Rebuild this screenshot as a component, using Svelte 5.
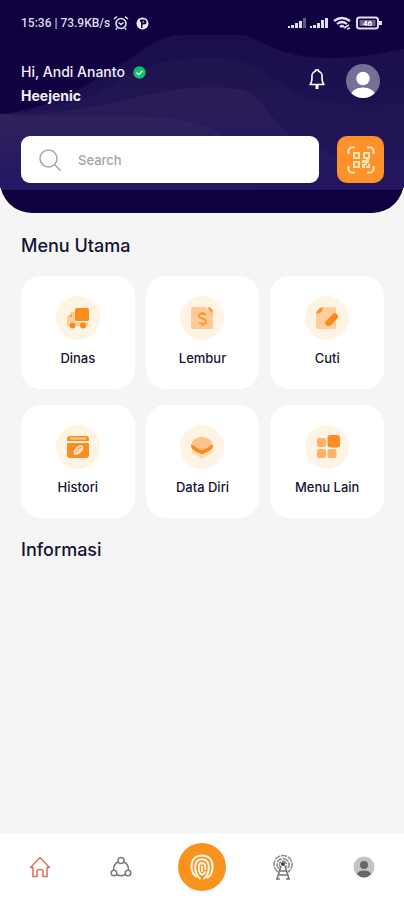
<script>
  let query = $state('');
  const menu = [
    { id: 'dinas', label: 'Dinas' },
    { id: 'lembur', label: 'Lembur' },
    { id: 'cuti', label: 'Cuti' },
    { id: 'histori', label: 'Histori' },
    { id: 'data', label: 'Data Diri' },
    { id: 'lain', label: 'Menu Lain' }
  ];
</script>

<div class="app">
  <header>
    <svg class="waves" viewBox="0 0 404 190" preserveAspectRatio="none" aria-hidden="true">
      <defs>
        <linearGradient id="far" x1="0" y1="0" x2="0" y2="1">
          <stop offset="0" stop-color="#1a0e4b" />
          <stop offset="1" stop-color="#211459" />
        </linearGradient>
        <linearGradient id="middle" x1="0" y1="0" x2="0" y2="1">
          <stop offset="0" stop-color="#21154f" />
          <stop offset="1" stop-color="#21145a" />
        </linearGradient>
        <linearGradient id="near" x1="0" y1="0" x2="0" y2="1">
          <stop offset="0" stop-color="#2b1e57" />
          <stop offset="1" stop-color="#23155f" />
        </linearGradient>
        <linearGradient id="front" x1="0" y1="0" x2="0" y2="1">
          <stop offset="0" stop-color="#30225c" />
          <stop offset="1" stop-color="#241661" />
        </linearGradient>
      </defs>
      <path d="M0 114C50 110 88 84 122 64C150 46 160 35 184 35H244C262 40 280 58 330 58C365 58 380 52 404 49V190H0Z" fill="url(#far)" />
      <path d="M0 114C80 110 104 90 132 74C160 59 190 58 220 58C258 60 277 87 310 98C340 107 370 105 404 104V190H0Z" fill="url(#middle)" />
      <path d="M0 114C65 116 105 105 145 95C180 87 215 86 238 89C262 95 265 112 286 132C312 151 360 165 404 160V190H0Z" fill="url(#near)" />
      <path d="M0 114C50 119 100 115 150 117C190 119 212 126 222 136C240 160 246 178 255 190H0Z" fill="url(#front)" />
    </svg>

    <div class="status">
      <span>15:36 | 73.9KB/s</span>
      <svg width="16" height="16" viewBox="0 0 16 16" fill="none" stroke="#e4e0ef" stroke-width="1.6" aria-hidden="true">
        <circle cx="8" cy="8.5" r="5" /><path d="M1 4 4 1.5M15 4 12 1.5M5.5 7.5 8 9.5 10.5 7.5M4 13 3 14.5M12 13 13 14.5" />
      </svg>
      <svg class="disc" width="13" height="13" viewBox="0 0 13 13" aria-hidden="true">
        <circle cx="6.5" cy="6.5" r="6" fill="#eeeaf5" /><path d="M4 2.500H8A2.500 2.500 0 0 1 8 7.500H6.500V11H5V5H4Z" fill="#1a0b4b" /><path d="M6.500 5H8" stroke="#eeeaf5" />
      </svg>
      <svg class="system" width="96" height="14" viewBox="0 0 96 14" aria-hidden="true">
        <g fill="#e2deed">
          <path d="M0 10h2v2H0zM3 9h3v3H3zM7 7h3v5H7zM11 5h3v7h-3z" /><path d="M15 2h3v10h-3z" opacity=".4" />
          <path d="M22 10h2v2h-2zM25 9h3v3h-3zM29 7h3v5h-3zM33 4h3v8h-3zM37 2h3v10h-3z" />
        </g>
        <g fill="none" stroke="#e2deed" stroke-width="2.200"><path d="M46 5q8-6 16 0M49 8q5-4 10 0M52 11q2-2 4 0" /><path d="m56 12 5-3M59 13l3-1" stroke-width="1.500" /></g>
        <rect x="69" y="1.500" width="21" height="11" rx="2.500" fill="none" stroke="#e2deed" stroke-width="2" />
        <rect x="71.500" y="4" width="16" height="6" fill="#6d6390" /><path d="M91 5h3v4h-3z" fill="#e2deed" />
        <text x="79.500" y="10" text-anchor="middle" fill="#fff" font-size="8" font-weight="700">46</text>
      </svg>
    </div>

    <div class="profile">
      <div class="greeting">
        <p>Hi, Andi Ananto
          <svg width="13" height="13" viewBox="0 0 13 13" aria-hidden="true"><circle cx="6.500" cy="6.500" r="6.200" fill="#12bd64" /><path d="m3.500 6.500 2.200 2.200L9.500 4.800" fill="none" stroke="#dfffee" stroke-width="1.500" /></svg>
        </p>
        <p class="name">Heejenic</p>
      </div>
      <button class="bell" aria-label="Notifikasi">
        <svg width="18" height="22" viewBox="0 0 18 22" fill="none" stroke="#fff" stroke-width="1.6" stroke-linejoin="round" aria-hidden="true">
          <path d="M2 16.500H16C14 14.500 14 12 14 9A5 5 0 0 0 10.500 3.300V2H7.500V3.300A5 5 0 0 0 4 9C4 12 4 14.500 2 16.500Z" /><path d="M9 17v4" stroke-width="3" />
        </svg>
      </button>
      <button class="avatar" aria-label="Profil saya">
        <svg width="34" height="34" viewBox="0 0 34 34" aria-hidden="true">
          <clipPath id="face"><circle cx="17" cy="17" r="17" /></clipPath>
          <g clip-path="url(#face)"><rect width="34" height="34" fill="#786f96" /><circle cx="17" cy="14.500" r="6.700" fill="#fff" /><ellipse cx="17" cy="31" rx="12" ry="7.500" fill="#fff" /></g>
        </svg>
      </button>
    </div>

    <div class="find">
      <label class="search">
        <svg width="22" height="22" viewBox="0 0 22 22" fill="none" stroke="#a3a4ac" stroke-width="1.500" aria-hidden="true"><circle cx="9.500" cy="9.500" r="8.500" /><path d="m15.500 15.500 6 6" /></svg>
        <input type="text" placeholder="Search" aria-label="Search" bind:value={query} />
      </label>
      <button class="scan" aria-label="Pindai kode QR">
        <svg width="28" height="28" viewBox="0 0 28 28" fill="none" stroke="#ffe5b8" stroke-width="2" aria-hidden="true">
          <path d="M1.500 8V5A3.500 3.500 0 0 1 5 1.500H8M20 1.500h3A3.500 3.500 0 0 1 26.500 5v3M26.500 20v3a3.500 3.500 0 0 1-3.500 3.500h-3M8 26.500H5A3.500 3.500 0 0 1 1.500 23v-3" />
          <path d="M7 7h5v5H7zM17 7h5v5h-5zM7 16h5v5H7z" />
          <path d="M15 14h4v3h-4zM19 11h3v6h-3zM15 18h3v4h-3zM18 17h2v2h-2zM19 20h2v2h-2zM21 18h2v4h-2z" fill="#ffe5b8" stroke="none" />
        </svg>
      </button>
    </div>
  </header>

  <main>
    <h2>Menu Utama</h2>
    <div class="grid">
      {#each menu as item (item.id)}
        <button class="card">
          <svg width="44" height="44" viewBox="0 0 44 44" aria-hidden="true">
            <circle cx="22" cy="22" r="22" fill="#fff3e4" />
            {#if item.id === 'dinas'}
              <path d="M11 30V21L15 16H19V26H32V30Z" fill="#ffce98" /><path d="m13 21 3-3v3Z" fill="#f99b3b" />
              <rect x="19" y="12" width="14" height="13" rx="1.500" fill="#fa8e1c" />
              <circle cx="16.500" cy="29.500" r="3" fill="#f78b20" /><circle cx="27" cy="29.500" r="3" fill="#f78b20" />
            {:else if item.id === 'lembur'}
              <path d="M12 11H27Q28 16 33 17V32Q33 33 32 33H12Q11 33 11 32V12Q11 11 12 11Z" fill="#ffca98" /><path d="M28 11Q33 12 33 17Q28 16 28 11Z" fill="#f39a35" />
              <path d="M26 18.500Q19 16 19 20C19 23 26 22 26 25.500Q26 29 19 27M22.500 16v2M22.500 27v3" fill="none" stroke="#eea039" stroke-width="2.200" />
            {:else if item.id === 'cuti'}
              <path d="M17 11H29Q31 11 31 13V31Q31 33 29 33H13Q11 33 11 31V17Q16 18 17 11Z" fill="#ffce9f" /><path d="M11 18Q12 13 17 11Q20 16 11 18Z" fill="#f7912b" />
              <path d="m21 25 7-7q2-2 4 0t1 4l-7 7q-3 2-5 0t0-4Z" fill="#fa8b16" />
            {:else if item.id === 'histori'}
              <path d="M11 16V14Q11 11 14 11H30Q33 11 33 14V16Z" fill="#fa8e22" /><path d="M14 13.500H30" stroke="#ffc68b" stroke-width="2" />
              <path d="M11 18H33V30Q33 33 30 33H14Q11 33 11 30Z" fill="#fa8e22" /><ellipse cx="22.500" cy="25" rx="5" ry="2.500" transform="rotate(-45 22.500 25)" fill="#ffb565" stroke="#fff1df" stroke-width="1.400" /><path d="m18 30 7-7" stroke="#fff1df" />
            {:else if item.id === 'data'}
              <path d="M12 23 22 30 32 23V26Q33 28 23 33Q22 33.500 21 33Q11 28 12 26Z" fill="#ffd8b0" />
              <path d="M11 19 22 25 33 19V22Q32 25 23 29Q22 29.500 21 29Q11 25 11 21Z" fill="#fa8b1b" />
              <path d="M12 18Q12 14 20 12Q22 11.500 24 12Q32 14 32 18Q33 19.500 23 25Q22 25.500 21 25Q11 20 12 18Z" fill="#ffc28a" />
            {:else}
              <g fill="#ffb167"><rect x="12" y="13" width="9" height="9" rx="2" /><rect x="12" y="24" width="9" height="9" rx="2" /><rect x="22.500" y="24" width="9" height="9" rx="2" /></g><rect x="22.500" y="10" width="12.500" height="12.500" rx="3" fill="#fa8e22" />
            {/if}
          </svg>
          <span>{item.label}</span>
        </button>
      {/each}
    </div>
    <h2>Informasi</h2>
  </main>

  <nav aria-label="Navigasi utama">
    <a href="#beranda" aria-label="Beranda">
      <svg width="22" height="22" viewBox="0 0 22 22" fill="none" stroke="#dd7658" stroke-width="1.600" stroke-linejoin="round" aria-hidden="true"><path d="M1.500 11.500 11 1.500 20.500 11.500H18V20.500H14V15.500Q14 13.500 11 13.500T8 15.500V20.500H4V11.500Z" /></svg>
    </a>
    <a href="#tim" aria-label="Tim">
      <svg width="22" height="22" viewBox="0 0 22 22" fill="none" stroke="#7c7c7c" stroke-width="1.500" aria-hidden="true"><circle cx="11" cy="4.500" r="3" /><circle cx="4" cy="17" r="2.800" /><circle cx="18" cy="17" r="2.800" /><path d="M8 6Q3.500 8 3.500 14M14 6Q18.500 8 18.500 14M6.500 18.500Q11 21 15.500 18.500" /></svg>
    </a>
    <a class="finger" href="#absen" aria-label="Absen">
      <svg width="24" height="26" viewBox="0 0 24 26" fill="none" stroke="#fff8eb" stroke-width="2" stroke-linecap="round" aria-hidden="true">
        <path d="M6 22.500Q1.500 19 1.500 12.500C1.500 5 6 1.500 12 1.500S22.500 5 22.500 12.500Q22.500 21 17.500 23.500" />
        <path d="M10 24.500Q5.200 21 5.200 13C5.200 8 8 5.200 12 5.200S18.800 8 18.800 13Q18.800 21 14 24.500" />
        <path d="M15 18Q14 20.500 12 20.500Q8.800 20.500 8.800 13Q8.800 9 12 9T15.200 13V15M12 12.500v4.500" />
      </svg>
    </a>
    <a href="#siaran" aria-label="Siaran">
      <svg width="20" height="26" viewBox="0 0 20 26" fill="none" stroke="#919191" stroke-width="1.600" aria-hidden="true"><path d="M5 18A9 9 0 1 1 15 18M6 15A6 6 0 1 1 14 15M7.500 13A3.500 3.500 0 1 1 12.500 13" stroke-dasharray="6 1" /><path d="M8 12 4 25M12 12l4 13M7 17h6M6 21h8M3 25h4M13 25h4" stroke="#777" /><circle cx="10" cy="10" r="2" fill="#444" stroke="none" /></svg>
    </a>
    <a href="#akun" aria-label="Akun">
      <svg width="22" height="22" viewBox="0 0 22 22" aria-hidden="true"><circle cx="11" cy="11" r="10.500" fill="#c4c4c4" /><circle cx="11" cy="9" r="4" fill="#666" /><path d="M4 18Q5 14.500 11 14.500T18 18Q15 21.500 11 21.500T4 18Z" fill="#666" /></svg>
    </a>
  </nav>
</div>

<style>
  :global(body) { margin: 0; background: #f5f5f5; }
  .app { min-height: 100vh; display: flex; flex-direction: column; font-family: Inter, "Open Sans", sans-serif; color: #171334; }
  button { border: 0; padding: 0; background: none; font: inherit; color: inherit; cursor: pointer; }
  svg { display: block; flex: none; }
  p, h2 { margin: 0; }
  header { position: relative; overflow: hidden; background: #100140; border-radius: 0 0 32px 32px; padding: 14px 20px 30px 21px; color: #f3f0fa; }
  .waves { position: absolute; top: 0; left: 0; width: 100%; height: 190px; }
  .status, .profile, .find { position: relative; display: flex; align-items: center; }
  .status { height: 18px; gap: 3px; font: 500 12px/18px Roboto, sans-serif; color: #dedaea; }
  .disc { margin-left: 4px; }
  .system { margin-left: auto; }
  .profile { height: 48px; margin-top: 28px; align-items: flex-start; }
  .greeting { flex: 1; font-size: 14px; font-weight: 500; line-height: 24px; }
  .greeting p { display: flex; align-items: center; gap: 8px; }
  .greeting .name { font-weight: 700; }
  .bell { margin: 8px 20px 0 0; }
  .avatar { margin: 4px 4px 0 0; }
  .find { margin-top: 28px; gap: 18px; }
  .search { flex: 1; min-width: 0; box-sizing: border-box; height: 47px; display: flex; align-items: center; gap: 17px; padding: 0 18px; background: #fff; border-radius: 9px; }
  input { flex: 1; min-width: 0; border: 0; outline: 0; padding: 0; background: none; font: 500 13px/20px Inter, sans-serif; color: #333; }
  input::placeholder { color: #a3a3a3; opacity: 1; }
  .scan { width: 47px; height: 47px; border-radius: 10px; background: #fd922a; display: grid; place-items: center; }
  main { flex: 1; padding: 21px 20px 24px 21px; }
  h2 { font-size: 18px; line-height: 24px; font-weight: 500; }
  .grid { display: grid; grid-template-columns: repeat(3, 1fr); gap: 16px 11px; margin: 18px 0 20px; }
  .card { display: flex; flex-direction: column; align-items: center; gap: 8px; height: 113px; box-sizing: border-box; padding-top: 20px; background: #fff; border-radius: 20px; font-size: 13px; line-height: 20px; font-weight: 500; }
  nav { height: 66px; background: #fff; display: grid; grid-template-columns: repeat(5, 1fr); align-items: center; justify-items: center; }
  nav a { display: grid; place-items: center; }
  .finger { width: 48px; height: 48px; border-radius: 50%; background: #f7931e; }
</style>
